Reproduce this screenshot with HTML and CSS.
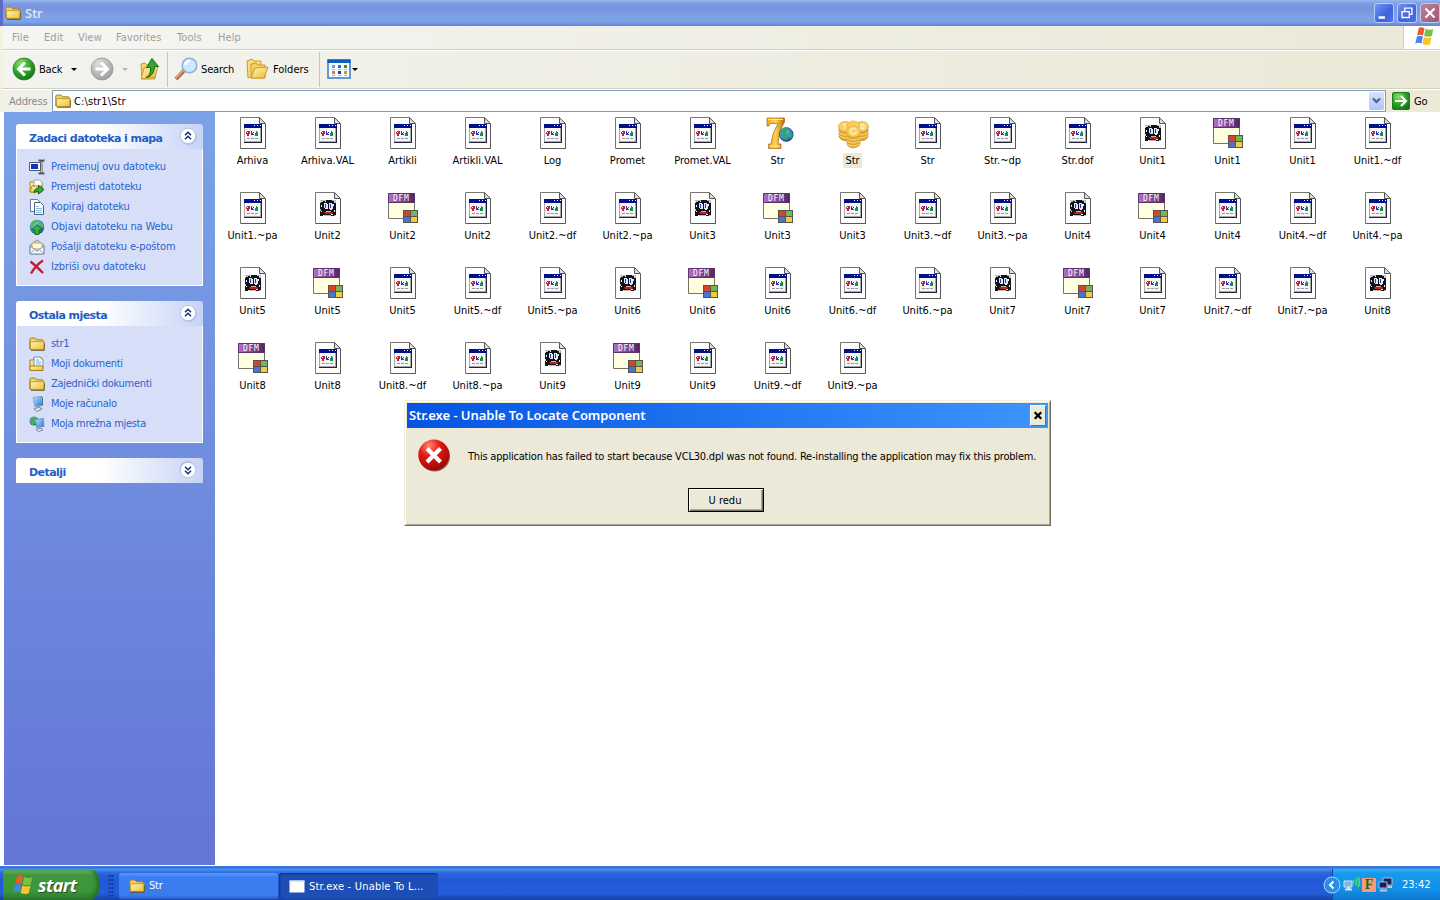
FILE: index.html
```html
<!DOCTYPE html>
<html lang="hr">
<head>
<meta charset="utf-8">
<title>Str</title>
<link rel="stylesheet" href="styles.css">
</head>
<body>
<svg class="defs" width="0" height="0" aria-hidden="true">
  <defs>
    <linearGradient id="gold" x1="0" y1="0" x2="1" y2="1"><stop offset="0" stop-color="#fff6b0"/><stop offset="1" stop-color="#eebc3a"/></linearGradient>
    <linearGradient id="purple"><stop offset="0" stop-color="#b56fc9"/><stop offset="1" stop-color="#522463"/></linearGradient>
    <linearGradient id="seven"><stop offset="0" stop-color="#e9a81f"/><stop offset=".5" stop-color="#ffd34f"/><stop offset="1" stop-color="#b06a14"/></linearGradient>
    <linearGradient id="screen" x1="0" y1="0" x2="1" y2="1"><stop offset="0" stop-color="#b8e8ff"/><stop offset="1" stop-color="#2472d8"/></linearGradient>
    <radialGradient id="green" cx=".35" cy=".25" r=".8"><stop offset="0" stop-color="#8be26b"/><stop offset=".5" stop-color="#35a82b"/><stop offset="1" stop-color="#137315"/></radialGradient>
    <radialGradient id="grey" cx=".35" cy=".25" r=".8"><stop offset="0" stop-color="#dedede"/><stop offset="1" stop-color="#9d9d9d"/></radialGradient>
    <radialGradient id="red" cx=".35" cy=".2" r=".85"><stop offset="0" stop-color="#ff8672"/><stop offset=".4" stop-color="#e61a14"/><stop offset="1" stop-color="#990606"/></radialGradient>
    <radialGradient id="globe" cx=".35" cy=".3" r=".8"><stop offset="0" stop-color="#8ad6f8"/><stop offset="1" stop-color="#0d4b9c"/></radialGradient>

    <symbol id="i-folder" viewBox="0 0 16 16">
      <path d="M.8 13V3.600Q.8 2 2.300 2h3.600l1.600 1.800h5.600q1.200 0 1.200 1.400V13z" fill="#f4d363" stroke="#a87d18"/>
      <path d="M1.500 13.300V7q0-1.300 1.300-1.300h12.400v6.500q0 1.300-1.200 1.300z" fill="url(#gold)" stroke="#b58a22" stroke-width=".8"/>
      <path d="M2 14.400h13.300V7" fill="none" stroke="#5f4a12" stroke-width=".8"/>
    </symbol>
    <symbol id="i-flag" viewBox="0 0 20 20">
      <path d="M4.500 2Q7 .5 10 2.200L8.600 9Q6 7.600 3 9z" fill="#ee5b2c"/>
      <path d="M11 2.700q3.600 1.600 7.400.2L17 9.600q-3.800 1.300-7.400-.2z" fill="#79c043"/>
      <path d="M2.800 10q3-1.400 5.700 0L7 16.700q-2.800-1.400-5.800 0z" fill="#4587e8"/>
      <path d="M9.400 10.500q3.800 1.500 7.300.2l-1.500 6.800q-3.600 1.300-7.300-.3z" fill="#fbc52b"/>
    </symbol>
    <symbol id="i-doc" viewBox="0 0 32 32">
      <path d="M3.500.5h18.700l6.300 6.300v24.700h-25z" fill="#fdfdfd" stroke="#77776f"/>
      <path d="M28.500 7v24.500H4" fill="none" stroke="#5a5a58"/>
      <path d="M22.500.6v5.900h5.900z" fill="#e0e0e0" stroke="#555"/>
    </symbol>
    <symbol id="i-file" viewBox="0 0 32 32">
      <use href="#i-doc"/>
      <path d="M7 8h18v18H7z" fill="#24243a"/>
      <path d="M7 8h17v17H7z" fill="#a9a9ad"/>
      <path d="M8 11h15v13H8z" fill="#f6f6f6"/>
      <path d="M7 7h18v4H7z" fill="#00108c"/>
      <path d="M17 8h1v1h-1zM20 8h1v1h-1zM23 8h1v1h-1z" fill="#fff"/>
      <path d="M9 15h1v-1h3v3h-1v2h-2v-2H9z" fill="#c12232"/><path d="M10 15h1v1h-1z" fill="#fff"/>
      <path d="M14 14h1v2h1v-1h1v1h-1v1h1v1h-3z" fill="#2336c5"/>
      <path d="M19 14h1v1h1v4h-3v-3h1z" fill="#169048"/>
      <path d="M10 21.500h3M14 21.500h3M18 21.500h3" stroke="#999"/>
    </symbol>
    <symbol id="i-face" viewBox="0 0 32 32">
      <use href="#i-doc"/>
      <path d="M8 8h16v16H8z" fill="#b9bcc0"/>
      <path d="M8 11h1v-1h2V9h3V8h6v1h2v2h2v12h-2v1h-3v-1h-7v1H8v-5h1v-2H8z" fill="#101216"/>
      <path d="M8 9h1v1H8zM22 9h1v1h-1zM9 13h1v2H9zM22 18h1v2h-1zM9 19h1v1H9zM11 23h1v1h-1zM19 22h2v1h-2zM13 9h1v1h-1zM21 12h1v2h-1z" fill="#f5f5f5"/>
      <path d="M12 11h3v1h1v5h-3v-1h-1zM17 11h3v1h1v5h-1v1h-2v-1h-1z" fill="#dceaff"/>
      <path d="M13 12h1v4h-1zM18 12h1v4h-1z" fill="#2440b4"/>
      <path d="M12 20h2v-1h5v1h2l-1 2h-7z" fill="#c52119"/>
      <path d="M14 19.500h5" stroke="#f2a094"/>
    </symbol>
    <symbol id="i-dfm" viewBox="0 0 32 32">
      <path d="M1.500 1.500h26v25h-26z" fill="#ffffdf" stroke="#74746c"/>
      <path d="M1.500 1.500h26v9h-26z" fill="url(#purple)" stroke="#5d306e"/>
      <text x="6" y="9" class="dfm-text">DFM</text>
      <path d="M16 18h15v13H16z" fill="#545454"/>
      <path d="M17 19h6v5h-6z" fill="#d8432c"/><path d="M24 19h6v5h-6z" fill="#78b552"/>
      <path d="M17 25h6v5h-6z" fill="#4775cf"/><path d="M24 25h6v5h-6z" fill="#f1cb42"/>
    </symbol>
    <symbol id="i-seven" viewBox="0 0 32 32">
      <path d="M5 1h17.500v4Q17 14 16 27h3v4.500H6.500V27H9Q10 16 16 6.500H8L7 9H5z" fill="url(#seven)" stroke="#a76512" stroke-width=".7"/>
      <path d="M6 2.500h15M8 29h10" stroke="#ffe891" stroke-width="1.200"/>
      <circle cx="24.300" cy="17.500" r="6.900" fill="url(#globe)" stroke="#164c5a" stroke-width=".7"/>
      <path d="M19 14q2-4 6-3l2 2-3 2 2 3-2 5-3-2-2-3zM27 16l4 1-2 4-3-1z" fill="#2ea878"/>
    </symbol>
    <symbol id="i-coins" viewBox="0 0 32 32">
      <path d="M2 9v11q2 4 8 4v4q6 6 13 0v-4q6 0 8-4V9z" fill="#e0a52a" stroke="#b57511" stroke-width=".5"/>
      <path d="M2 15.500q4 3 8 2.500M2 18.500q4 3 8 2.500M23 18q5 0 8-2.500M23 21q5 0 8-2.500M10 21q6 4 13 0M10 24q6 4 13 0M10 27q6 4 13 0" stroke="#fbe08a" fill="none"/>
      <g fill="#f9cf62" stroke="#e3a936" stroke-width=".7"><ellipse cx="8" cy="9.500" rx="6.500" ry="5"/><ellipse cx="25" cy="9.500" rx="6.500" ry="5"/><ellipse cx="16.500" cy="8.500" rx="6" ry="4.500"/><ellipse cx="16.500" cy="14.500" rx="6.800" ry="5.600"/></g>
      <path d="M6 8l2-1v5M19 12.500q-3.500-2.500-5 0v3.500q2 2.500 5 0v-2M24 7.500h3v4h-3z" fill="none" stroke="#fff3ba" stroke-width="1.300"/>
    </symbol>
    <symbol id="i-rename" viewBox="0 0 16 16">
      <path d="M.5 3.500h11v8H.5z" fill="#f7f7ff" stroke="#555b70"/><path d="M2 5h7v5H2z" fill="#0a39b4"/>
      <path d="M9.500 1.500h2l1 1 1-1h2M12.500 2.500v11M9.500 14.500h2l1-1 1 1h2" fill="none" stroke="#555" stroke-width="2"/><path d="M12.500 3v10" stroke="#ddd" stroke-width=".7"/>
    </symbol>
    <symbol id="i-move" viewBox="0 0 16 16">
      <path d="M1 3h4l1 1h7v9H1z" fill="url(#gold)" stroke="#af8923"/><path d="M5 1h6l2 2v8H5z" fill="#fff" stroke="#9aa4b1"/><path d="M1 13 3 7h10l-2 6z" fill="url(#gold)" stroke="#af8923"/>
      <path d="M5 14q0-4.500 4.500-5V6.500L15 10.500 9.500 15v-3q-3 0-4.500 2z" fill="#35b02c" stroke="#17651a"/>
    </symbol>
    <symbol id="i-copy" viewBox="0 0 16 16">
      <path d="M1.500.5h7l2 2v10h-9z" fill="#fff" stroke="#667b98"/><path d="M5.500 3.500h6l3 3v9h-9z" fill="#fff" stroke="#465f7e"/>
      <path d="M7 7.500h3M7 9.500h6M7 11.500h6M7 13.500h6" stroke="#8bb4dc"/>
    </symbol>
    <symbol id="i-web" viewBox="0 0 16 16">
      <circle cx="8" cy="8" r="7.300" fill="url(#globe)"/><path d="M2 4q3-4 6-3l-1 3-3 3-3 1zM10 2l4 3 1 4-3-1z" fill="#58b854"/>
      <path d="M8 5.500 13.500 11H10v4.500H6V11H2.500z" fill="#32ba2a" stroke="#176c1b"/>
    </symbol>
    <symbol id="i-mail" viewBox="0 0 16 16">
      <path d="M1 6.500 8 1l7 5.500V15H1z" fill="#d5e3f7" stroke="#7a8ca6"/><path d="M3 4h10v6H3z" fill="#fffadb" stroke="#d0a04b"/>
      <path d="M1 7l7 5 7-5v8H1z" fill="#eff5ff" stroke="#7a8ca6"/><path d="M1 15l5-5M15 15l-5-5" stroke="#91a8c7"/>
    </symbol>
    <symbol id="i-delete" viewBox="0 0 16 16"><path d="M1.500 2.500q5 4 12.500 11.500M14 1.500Q7 6 2 14.500" stroke="#cc1730" stroke-width="2.300" fill="none"/></symbol>
    <symbol id="i-docs" viewBox="0 0 16 16">
      <path d="M1 4h3l1-2h8v12H1z" fill="url(#gold)" stroke="#a67b18"/><path d="M5 1h6l3 3v8H5z" fill="#f5fbff" stroke="#7493b4"/>
      <path d="M7 4h3M7 6h5M7 8h5" stroke="#79addd"/><path d="M1 10h13v4.500H1z" fill="url(#gold)" stroke="#a67b18"/>
    </symbol>
    <symbol id="i-pc" viewBox="0 0 16 16">
      <path d="M4 1.500l8-1 1.500 9L6 11z" fill="url(#screen)" stroke="#8fa7c7"/><path d="M12 .5l1.500 1v8" fill="none" stroke="#5a6884"/>
      <path d="M5 13l5-2 3 2-5 2.500z" fill="#dfe3ec" stroke="#7d879b"/>
    </symbol>
    <symbol id="i-net" viewBox="0 0 16 16">
      <circle cx="5" cy="5" r="4.600" fill="url(#globe)"/><path d="M1 3q3-4 6-1L5 5l1 3-3 1z" fill="#4ab13f"/>
      <path d="M6.500 3.500l8-1 .5 8-7.500 1z" fill="url(#screen)" stroke="#7893b8"/><path d="M7 13.500l5-1.500 2 2-5 1.500z" fill="#e3e7f0" stroke="#7d879b"/>
    </symbol>
    <symbol id="i-chevrons" viewBox="0 0 20 20">
      <circle cx="10.500" cy="10.800" r="8" fill="#8393c6" opacity=".55"/><circle cx="10" cy="10" r="7.700" fill="#fff" stroke="#b9c4e4"/>
      <path d="M7 9.200l3-3 3 3M7 13.200l3-3 3 3" fill="none" stroke="#12307c" stroke-width="1.500"/>
    </symbol>
  </defs>
</svg>

<div class="window">
  <header class="titlebar">
    <svg class="ico16"><use href="#i-folder"/></svg>
    <span class="title">Str</span>
    <div class="controls">
      <svg class="control" viewBox="0 0 20 20"><path d="M4 13.500h7v3H4z" fill="#fff"/></svg>
      <svg class="control" viewBox="0 0 20 20"><path d="M7.500 8V4.500h8v7H13M4.500 8.500h8v6.500h-8zM4.500 8.500h8M7.500 4.500h8" fill="none" stroke="#fff" stroke-width="1.500"/></svg>
      <svg class="control control-close" viewBox="0 0 20 20"><path d="M5 5l10 10M15 5 5 15" stroke="#fff" stroke-width="2.300"/></svg>
    </div>
  </header>
  <nav class="menubar">
    <span class="m-file">File</span><span class="m-edit">Edit</span><span class="m-view">View</span><span class="m-fav">Favorites</span><span class="m-tools">Tools</span><span>Help</span>
    <div class="brand"><svg width="21" height="21"><use href="#i-flag"/></svg></div>
  </nav>
  <div class="toolbar">
    <svg class="back-icon" width="24" height="24" viewBox="0 0 24 24"><circle cx="12" cy="12" r="11" fill="url(#green)" stroke="#2b7a27" stroke-width=".8"/><path d="M13 5.500 6.500 12l6.500 6.500M7 12h11.500" fill="none" stroke="#fff" stroke-width="3"/></svg>
    <span class="t-back">Back</span><i class="caret"></i>
    <svg class="forward-icon" width="24" height="24" viewBox="0 0 24 24"><circle cx="12" cy="12" r="11" fill="url(#grey)" stroke="#969696" stroke-width=".8"/><path d="M11 5.500l6.500 6.500-6.500 6.500M17 12H5.500" fill="none" stroke="#fff" stroke-width="3"/></svg>
    <i class="caret caret-off"></i>
    <svg class="up-icon" width="22" height="24" viewBox="0 0 22 24"><path d="M2 7l4-1 2 2h9l-1 14H3z" fill="#f4d76c" stroke="#c79a2a"/><path d="M2 22 5 11l14-2-3 11z" fill="url(#gold)" stroke="#c79a2a"/><path d="M7 20.500q5-2 4.500-10H7.500L13 1.500l6.500 8h-4Q15.500 19 7 20.500z" fill="#32a72b" stroke="#176b19"/></svg>
    <div class="sep"></div>
    <svg class="search-icon" width="24" height="24" viewBox="0 0 24 24"><path d="M2 22l8.500-9" stroke="#9b6352" stroke-width="4"/><path d="M2 21l8-8.500" stroke="#e1a078" stroke-width="2"/><circle cx="15.500" cy="8.500" r="7.300" fill="#c9eaff" stroke="#8fb0dc" stroke-width="1.600"/><path d="M11 8q1-4 5-4" fill="none" stroke="#fff" stroke-width="2.500"/></svg>
    <span class="t-search">Search</span>
    <svg class="folders-icon" width="23" height="22" viewBox="0 0 23 22"><path d="M1 3l5-2 2 2h7v12L2 20z" fill="#f7dc79" stroke="#c99932"/><path d="M5 20V6l5-1 2 2h7v13z" fill="#f4cf62" stroke="#c99932"/><path d="M5 20 9 10l13-1-4 11z" fill="url(#gold)" stroke="#c99932"/></svg>
    <span class="t-folders">Folders</span>
    <div class="sep"></div>
    <svg class="views-icon" width="24" height="20" viewBox="0 0 24 20"><path d="M1 1h22v18H1z" fill="#f9fbff" stroke="#3679c9" stroke-width="1.500"/><path d="M.5.500h23v3.500H.5z" fill="#0d5cc3"/><path d="M5 6h3v3H5z" fill="#8193c0"/><path d="M11 6h3v3h-3z" fill="#2968c5"/><path d="M17 6h3v3h-3z" fill="#2a9638"/><path d="M5 12h3v3H5z" fill="#df7851"/><path d="M11 12h3v3h-3z" fill="#1b4aa4"/><path d="M17 12h3v3h-3z" fill="#bf9e25"/><path d="M5 10.500h3M11 10.500h3M17 10.500h3M5 16.500h3M11 16.500h3M17 16.500h3" stroke="#adb4c1"/></svg>
    <i class="caret caret-views"></i>
  </div>
  <div class="addressbar">
    <span class="address-label">Address</span>
    <div class="address-box"><svg class="ico16"><use href="#i-folder"/></svg><span class="path">C:\str1\Str</span><svg class="drop" viewBox="0 0 15 18"><path d="M4 6.500l3.500 3.500L11 6.500" fill="none" stroke="#4d6185" stroke-width="2.200"/></svg></div>
    <svg class="go-icon" width="18" height="18" viewBox="0 0 18 18"><rect x=".5" y=".5" width="17" height="17" rx="1.500" fill="url(#green)" stroke="#1b7c20"/><path d="M3 9h11M9 4l5 5-5 5" fill="none" stroke="#fff" stroke-width="2.200"/></svg>
    <span class="go">Go</span>
  </div>
  <main class="content">
    <aside class="sidebar">
      <section class="panel">
        <h2><span>Zadaci datoteka i mapa</span><svg class="toggle"><use href="#i-chevrons"/></svg></h2>
        <ul>
          <li><svg class="ico16"><use href="#i-rename"/></svg><span>Preimenuj ovu datoteku</span></li>
          <li><svg class="ico16"><use href="#i-move"/></svg><span>Premjesti datoteku</span></li>
          <li><svg class="ico16"><use href="#i-copy"/></svg><span>Kopiraj datoteku</span></li>
          <li><svg class="ico16"><use href="#i-web"/></svg><span>Objavi datoteku na Webu</span></li>
          <li><svg class="ico16"><use href="#i-mail"/></svg><span>Pošalji datoteku e-poštom</span></li>
          <li><svg class="ico16"><use href="#i-delete"/></svg><span>Izbriši ovu datoteku</span></li>
        </ul>
      </section>
      <section class="panel panel-places">
        <h2><span>Ostala mjesta</span><svg class="toggle"><use href="#i-chevrons"/></svg></h2>
        <ul>
          <li><svg class="ico16"><use href="#i-folder"/></svg><span>str1</span></li>
          <li><svg class="ico16"><use href="#i-docs"/></svg><span>Moji dokumenti</span></li>
          <li><svg class="ico16"><use href="#i-folder"/></svg><span>Zajednički dokumenti</span></li>
          <li><svg class="ico16"><use href="#i-pc"/></svg><span>Moje računalo</span></li>
          <li><svg class="ico16"><use href="#i-net"/></svg><span>Moja mrežna mjesta</span></li>
        </ul>
      </section>
      <section class="panel">
        <h2><span>Detalji</span><svg class="toggle toggle-down"><use href="#i-chevrons"/></svg></h2>
      </section>
    </aside>
    <div class="files" id="files"></div>
  </main>
</div>

<footer class="taskbar">
  <div class="start"><svg width="22" height="22"><use href="#i-flag"/></svg><span>start</span></div>
  <div class="grip"></div>
  <div class="task"><svg class="ico16"><use href="#i-folder"/></svg><span>Str</span></div>
  <div class="task task-active"><svg class="ico16" viewBox="0 0 16 16"><path d="M.5 2.500h15v12H.5z" fill="#fff"/><path d="M.5 2.500h15v1.500H.5z" fill="#d5e4fa"/></svg><span>Str.exe - Unable To L...</span></div>
  <div class="tray">
    <svg class="tray-arrow" width="18" height="18" viewBox="0 0 18 18"><circle cx="9" cy="9" r="8" fill="#2b8bea" stroke="#a8d6fb"/><path d="M10.500 5.500 7 9l3.500 3.500" fill="none" stroke="#fff" stroke-width="2"/></svg>
    <svg width="17" height="16" viewBox="0 0 17 16"><path d="M1 4h8v6H1z" fill="#7cb5ed" stroke="#d2e4f4"/><path d="M2 12.500h7M4 11h3" stroke="#d9e0e8" stroke-width="2"/><path d="M10 3q1.500 2 0 4M12.500 1.500q2.500 3.500 0 7M15 0q3 5 0 10" fill="none" stroke="#54e05c" stroke-width="1.500"/></svg>
    <span class="tray-f">F</span>
    <svg width="15" height="16" viewBox="0 0 15 16"><path d="M5 1h9v7H5z" fill="#15235f" stroke="#b5b9d4"/><path d="M1 5h8v6H1z" fill="#111e5a" stroke="#b5b9d4"/><path d="M2 13.500h7M10 10h4" stroke="#c6c8dd" stroke-width="2"/></svg>
    <span class="clock">23:42</span>
  </div>
</footer>

<div class="dialog" role="alertdialog">
  <div class="dialog-title"><span>Str.exe - Unable To Locate Component</span><svg class="dialog-close" viewBox="0 0 15 20"><path d="M4 6.500l7 7M11 6.500l-7 7" stroke="#000" stroke-width="2.400"/></svg></div>
  <div class="dialog-body">
    <svg width="33" height="33" viewBox="0 0 33 33"><circle cx="16.800" cy="17.200" r="15.300" fill="#5a0a08" opacity=".6"/><circle cx="15.800" cy="16" r="15.500" fill="url(#red)"/><path d="M9 9.500l13.500 13.500M22.500 9.500 9 23" stroke="#fff" stroke-width="4.200"/></svg>
    <p>This application has failed to start because VCL30.dpl was not found. Re-installing the application may fix this problem.</p>
  </div>
  <button class="ok" type="button">U redu</button>
</div>
<script src="files.js"></script>
</body>
</html>
```

FILE: styles.css
```css
* { box-sizing: border-box; }
body {
  margin: 0; width: 1440px; height: 900px; overflow: hidden;
  display: flex; flex-direction: column; background: #fff; color: #000;
  font: 11px/14px "DejaVu Sans Condensed", "DejaVu Sans", sans-serif;
  font-stretch: condensed; letter-spacing: -.2px;
}
.defs { position: absolute; }
span, p { white-space: nowrap; }
.ico16 { width: 16px; height: 16px; flex: none; }
.window { height: 866px; display: flex; flex-direction: column; }

.titlebar {
  height: 26px; flex: none; display: flex; align-items: center; padding: 0 0 1px 2px; border-left: 3px solid #5a6bc8;
  background: linear-gradient(#96b6ee 0, #7a9ae2 4px, #7895de 9px, #7fa2e6 17px, #7da2e8 22px, #6687d7 25px, #6687d7 26px);
}
.title { margin-left: 4px; font: 600 13px "Noto Sans", sans-serif; letter-spacing: -.2px; color: #d8e4f8; }
.controls { margin-left: auto; display: flex; gap: 3px; }
.control { width: 20px; height: 20px; border: 1px solid #b9cbf4; border-radius: 3px; background: linear-gradient(135deg, #7595ee, #3e63dd 60%, #4a72e6); }
.control-close { background: linear-gradient(135deg, #c08298, #9f5474); }

.menubar, .toolbar, .addressbar { border-left: 3px solid #f4f1e2; }
.menubar {
  height: 24px; flex: none; display: flex; align-items: center; padding-left: 9px;
  color: #a09f96; letter-spacing: .1px; border-bottom: 1px solid #d3d0c0; background: linear-gradient(90deg, #f5f5f4, #edebdc 80%, #ece9d8);
}
.m-file { width: 32px; } .m-edit { width: 34px; } .m-view { width: 38px; } .m-fav { width: 61px; } .m-tools { width: 41px; }
.brand { margin-left: auto; width: 37px; height: 23px; padding-left: 10px; background: #fff; border-left: 1px solid #cfccbc; }

.toolbar {
  height: 39px; flex: none; display: flex; align-items: center; padding: 0 0 1px 9px;
  border-top: 1px solid #fff; border-bottom: 1px solid #d3d0c0; background: linear-gradient(90deg, #f3f3ef, #edebdc 75%, #ece9d8);
}
.toolbar > * { flex: none; }
.toolbar span { padding-top: 1px; }
.t-back { width: 24px; margin-left: 3px; }
.caret { width: 0; height: 0; border: 3px solid transparent; border-top-color: #000; border-bottom: 0; margin-left: 8px; }
.forward-icon { margin-left: 13px; }
.caret-off { border-top-color: #b7b6ad; }
.up-icon { margin-left: 11px; }
.sep { width: 1px; height: 35px; margin-left: 6px; background: #c9c6b5; }
.search-icon { margin-left: 6px; }
.t-search { width: 34px; margin-left: 3px; letter-spacing: -.15px; }
.folders-icon { margin-left: 11px; }
.t-folders { width: 37px; margin-left: 4px; letter-spacing: 0; }
.toolbar .t-folders + .sep { margin-left: 9px; }
.views-icon { margin-left: 7px; }
.caret-views { margin-left: 1px; }

.addressbar { height: 23px; flex: none; display: flex; align-items: center; padding-left: 6px; border-top: 1px solid #fff; background: linear-gradient(90deg, #f1f1eb, #ece9d8); }
.address-label { width: 43px; padding-top: 1px; color: #8b8a83; letter-spacing: -.1px; }
.address-box { width: 1334px; height: 22px; display: flex; align-items: center; gap: 3px; padding-left: 2px; background: #fff; border: 1px solid #7f9db9; }
.path { padding-top: 2px; letter-spacing: .1px; }
.drop { width: 15px; height: 18px; margin: 0 1px 0 auto; border-radius: 2px; background: linear-gradient(#d5e2fd, #b0c6f6); }
.go-icon { margin: 0 4px 0 6px; }
.go { padding-top: 1px; }

.content { height: 754px; display: flex; padding-left: 4px; }
.sidebar { width: 211px; height: 753px; flex: none; padding: 12px 12px 0; display: flex; flex-direction: column; gap: 15px; background: linear-gradient(#7ba2e7, #6375d6); }
.panel h2 {
  height: 25px; margin: 0; display: flex; align-items: center; justify-content: space-between; padding: 4px 5px 0 13px;
  font: bold 11px/14px "DejaVu Sans", sans-serif; letter-spacing: -.57px; color: #215dc6;
  border-radius: 3px 3px 0 0; background: linear-gradient(90deg, #fff 45%, #c6d3f7);
}
.toggle { width: 20px; height: 20px; margin-top: -6px; }
.toggle-down { transform: rotate(180deg); }
.panel ul { margin: 0; padding: 7px 0 9px 12px; list-style: none; border: 1px solid #fff; border-top: 0; background: #d6dff7; color: #2a63cd; letter-spacing: -.14px; }
.panel-places ul { letter-spacing: -.3px; }
.panel li { height: 20px; display: flex; align-items: center; gap: 6px; }
.panel li svg { margin-top: 2px; }
.panel li span { padding-top: 2px; }

.files { display: grid; grid-template-columns: repeat(16, 75px); grid-auto-rows: 75px; padding-top: 5px; align-content: start; }
.file { display: flex; flex-direction: column; align-items: center; }
.file svg { width: 32px; height: 32px; margin-left: 1px; }
.file span { margin-top: 4px; padding: 0 2px; line-height: 15px; letter-spacing: 0; }
.file .selected { background: #ece9d8; }
.dfm-text { font: 8px "DejaVu Sans Mono", monospace; letter-spacing: .7px; fill: #fff; }

.taskbar {
  height: 34px; flex: none; display: flex; align-items: flex-end; color: #fff;
  background: linear-gradient(#3f7fe0 0, #2f6fdb 2px, #4a92ee 3px, #2a66dd 7px, #2258d6 14px, #245edb 27px, #1941a5 34px);
}
.start {
  width: 97px; height: 30px; margin-left: 3px; display: flex; align-items: center; gap: 4px; padding: 0 0 1px 9px; border-radius: 0 8px 10px 0 / 0 15px 15px 0;
  font: italic bold 18px "Open Sans", sans-serif; letter-spacing: -.6px; text-shadow: 1px 1px 1px #254d1f;
  background: linear-gradient(#6bb768 0, #3d963c 5px, #3c983c 20px, #307f30); box-shadow: inset -3px -1px 4px #226d26;
}
.grip { width: 6px; height: 22px; margin: 0 5px 4px 8px; background: radial-gradient(circle, #133b9f 1px, transparent 1.3px) 0 0 / 3px 4px; }
.task { width: 159px; height: 26px; margin: 0 1px 1px 0; display: flex; align-items: center; gap: 4px; padding-left: 10px; border-radius: 3px; background: linear-gradient(#5a99fb, #3b7ef2 4px, #3a7cf0 22px, #2860d3); }
.task-active { background: #1c4eb5; box-shadow: inset 1px 1px 2px #103486; letter-spacing: .2px; }
.task-active span { padding-top: 1px; }
.tray { width: 108px; height: 31px; margin-left: auto; display: flex; align-items: center; gap: 2px; border-left: 1px solid #0b4aa8; background: linear-gradient(#3ab4f5 0, #159bec 4px, #1290e8 20px, #0d77ce 31px); }
.tray-arrow { margin-left: -10px; }
.tray-f { width: 14px; height: 14px; text-align: center; font: bold 14px/14px "Liberation Serif", serif; color: #1f6a1b; background: #f59a7b; }
.clock { margin-left: 7px; padding-top: 1px; letter-spacing: 0; }

.dialog {
  position: absolute; left: 404px; top: 400px; width: 647px; height: 126px; padding: 2px; background: #ece9d8;
  border: 1px solid; border-color: #f1efe2 #716f64 #716f64 #f1efe2; box-shadow: inset 1px 1px #fff, inset -1px -1px #aca899;
}
.dialog-title { height: 25px; display: flex; align-items: center; justify-content: space-between; padding: 0 2px 2px 2px; color: #fff; font: 600 13px "Noto Sans", sans-serif; letter-spacing: -.06px; background: linear-gradient(90deg, #0554e2, #3d95ff); }
.dialog-close { width: 16px; height: 21px; margin-top: 1px; background: #ece9d8; border: 1px solid; border-color: #fff #716f64 #716f64 #fff; }
.dialog-body { display: flex; align-items: center; gap: 17px; padding: 11px 0 0 11px; }
.dialog-body p { margin: 0; padding-top: 2px; }
.ok { display: block; width: 76px; height: 24px; margin: 16px 0 0 281px; padding: 1px 2px 0 0; font: inherit; letter-spacing: 0; color: #000; background: #ece9d8; border: 1px solid #000; border-radius: 0; box-shadow: inset 1px 1px #fff, inset -1px -1px #716f64, inset -2px -2px #aca899; }
```

FILE: files.js
```js
const files = [
  ['file', 'Arhiva'], ['file', 'Arhiva.VAL'], ['file', 'Artikli'], ['file', 'Artikli.VAL'],
  ['file', 'Log'], ['file', 'Promet'], ['file', 'Promet.VAL'], ['seven', 'Str'],
  ['coins', 'Str', true], ['file', 'Str'], ['file', 'Str.~dp'], ['file', 'Str.dof'],
];
for (let n = 1; n <= 9; n++) {
  const unit = 'Unit' + n;
  files.push(['face', unit], ['dfm', unit], ['file', unit], ['file', unit + '.~df'], ['file', unit + '.~pa']);
}
document.getElementById('files').innerHTML = files.map(([icon, name, selected]) =>
  `<div class="file"><svg><use href="#i-${icon}"/></svg><span${selected ? ' class="selected"' : ''}>${name}</span></div>`
).join('');
```
